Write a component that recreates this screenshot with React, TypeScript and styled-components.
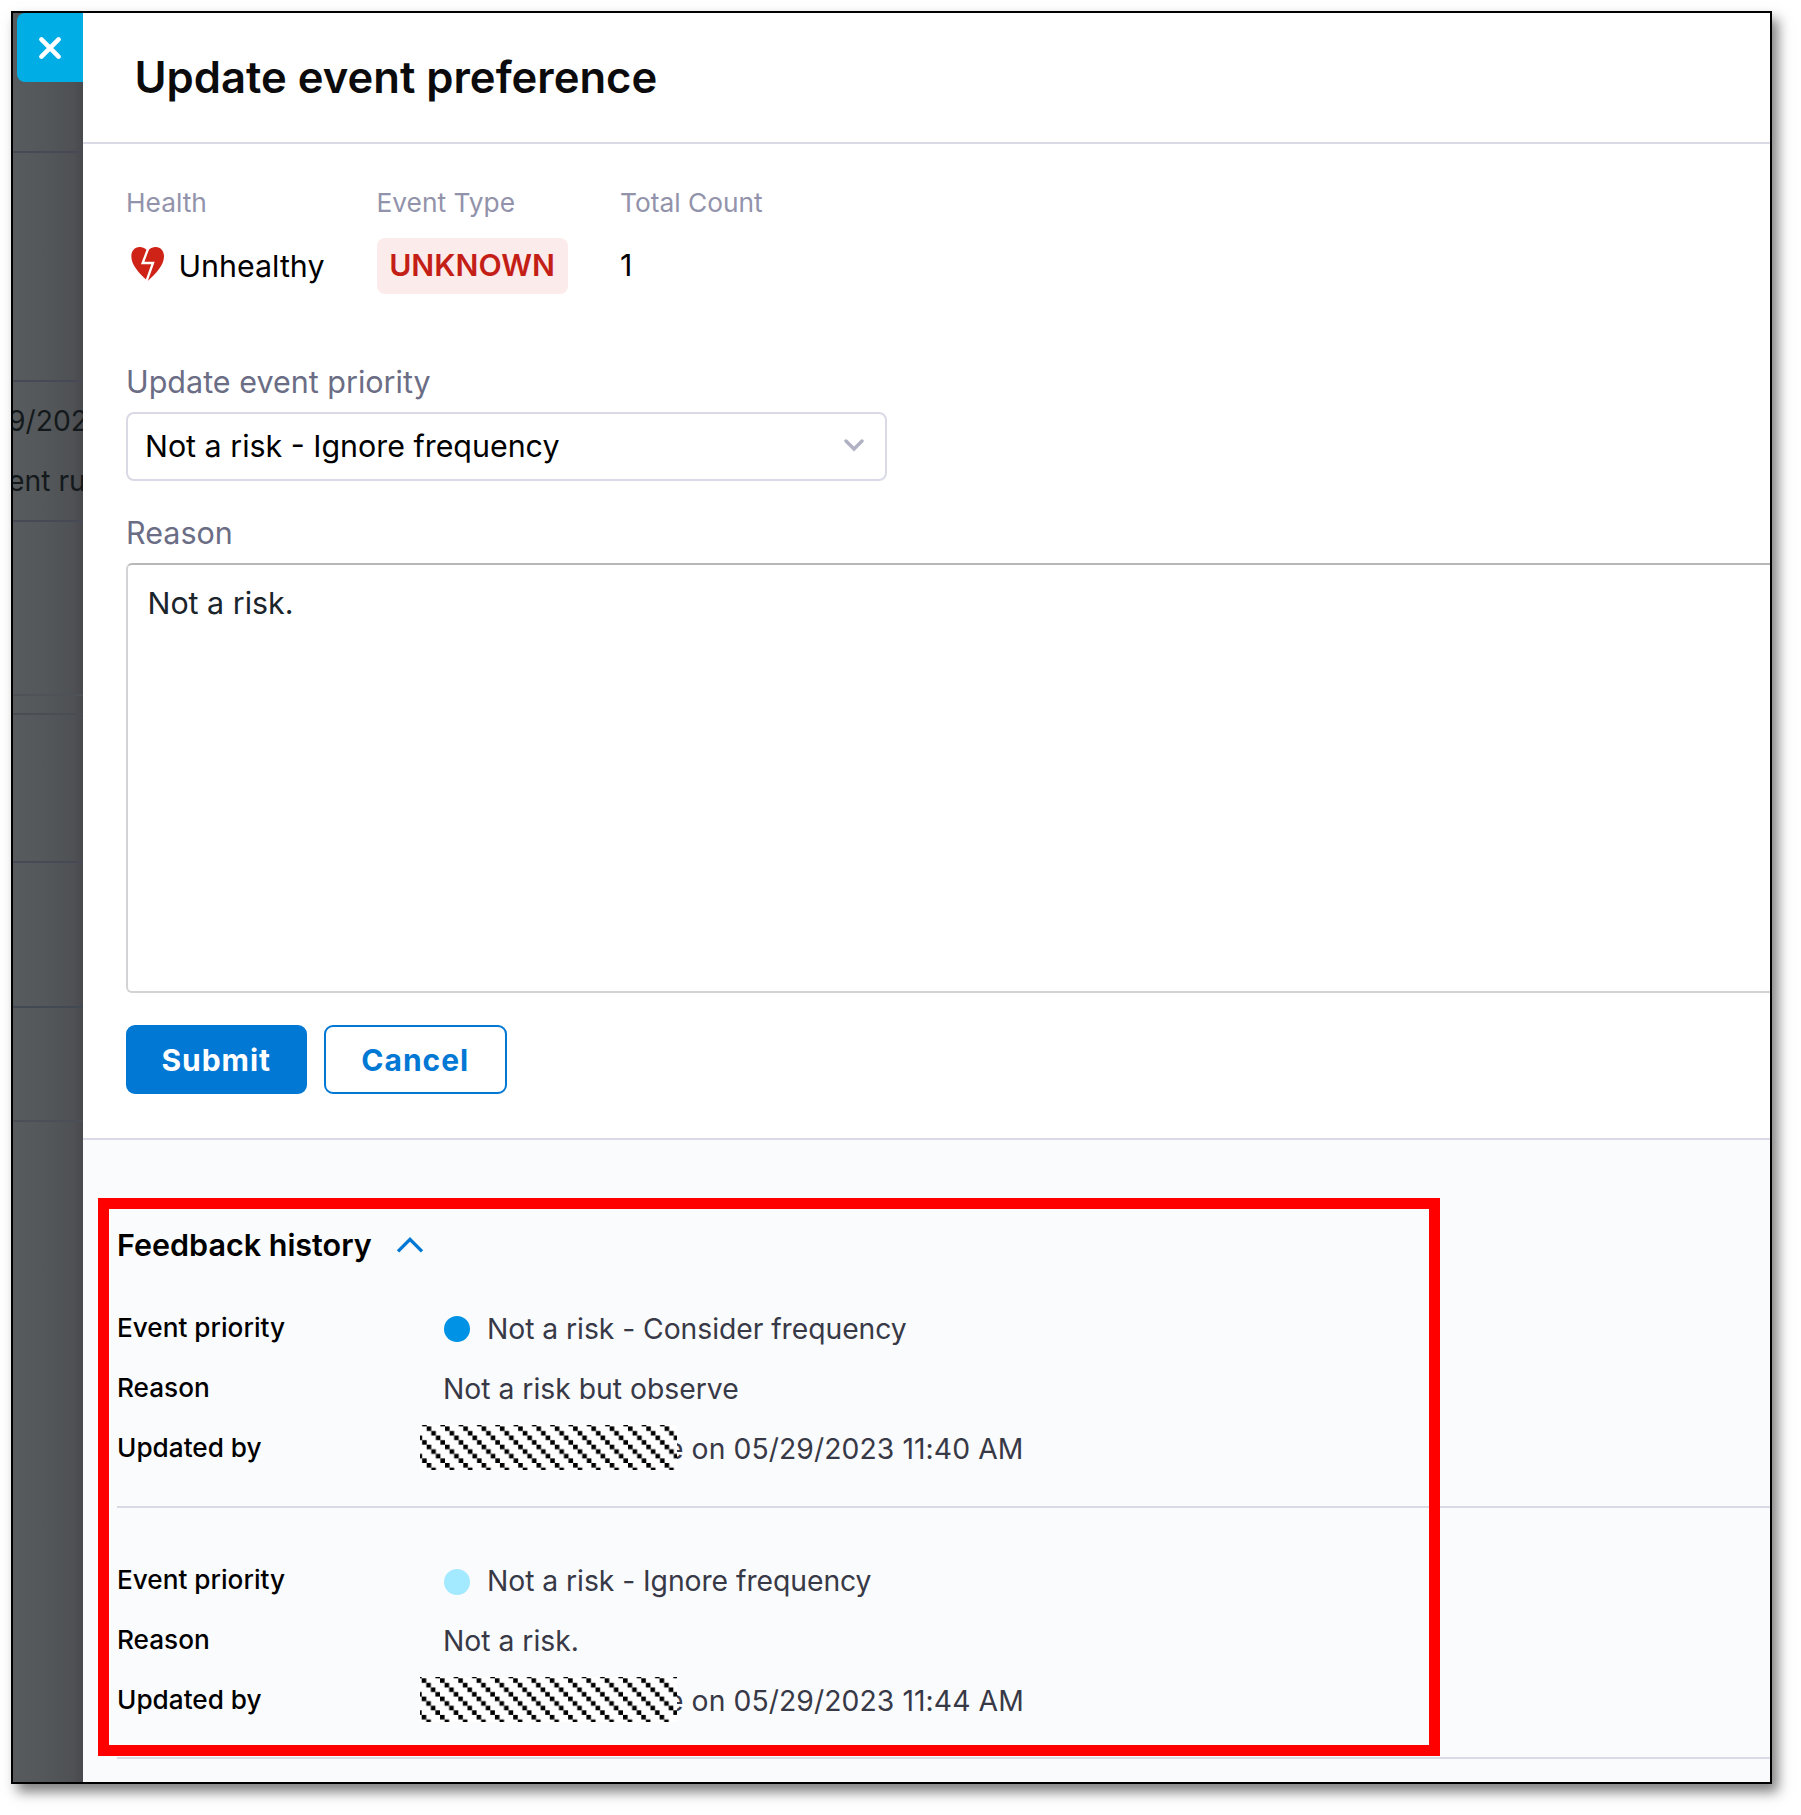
import React from "react";
import styled, { createGlobalStyle } from "styled-components";

const color = {
  line: "#d9dae6",
  primary: "#0278d5",
  accent: "#00ade4",
  danger: "#c41f17",
  muted: "#9293ab",
  label: "#6b6d85",
  text: "#383946",
};

const GlobalStyle = createGlobalStyle`
  * { box-sizing: border-box; }
  body {
    margin: 0;
    background: #fff;
    font-family: Inter, "Liberation Sans", sans-serif;
    color: #000;
  }
`;

const Page = styled.main`
  width: 1801px;
  height: 1815px;
  padding: 11px 0 0 11px;
  overflow: hidden;
`;

const Frame = styled.div`
  position: relative;
  display: flex;
  width: 1761px;
  height: 1773px;
  border: 2px solid #000;
  box-shadow: 6px 8px 12px rgba(0, 0, 0, 0.5);
  overflow: hidden;
`;

const Backdrop = styled.aside`
  flex: none;
  width: 70px;
  overflow: hidden;
  background: linear-gradient(90deg, #575b5d 0%, #53575a 50%, #4f5154 85%, #48494c 100%);
`;

const BackdropBand = styled.div<{ $height: number; $line?: string; $top?: number }>`
  height: ${(p) => p.$height}px;
  padding-top: ${(p) => p.$top ?? 0}px;
  border-bottom: 2px solid ${(p) => p.$line ?? "#474a54"};
`;

const BackdropText = styled.div`
  height: 59.5px;
  margin-left: -5px;
  line-height: 59.5px;
  font-size: 28.3px;
  white-space: nowrap;
  color: #14191c;
`;

const CloseButton = styled.button`
  display: flex;
  align-items: center;
  justify-content: center;
  width: 66px;
  height: 69px;
  margin-left: 4px;
  padding: 0;
  border: 0;
  border-radius: 8px 0 0 8px;
  background: ${color.accent};
`;

const Drawer = styled.section`
  flex: 1;
  min-width: 0;
  display: flex;
  flex-direction: column;
  background: #fff;
`;

const Header = styled.header`
  display: flex;
  align-items: center;
  height: 131px;
  padding: 0 0 0 51.5px;
  border-bottom: 2px solid ${color.line};
`;

const Title = styled.h1`
  margin: 0;
  font-size: 43.6px;
  font-weight: 600;
  line-height: 56px;
  color: #0b0b0d;
`;

const Form = styled.div`
  display: flex;
  flex-direction: column;
  align-items: flex-start;
  height: 995.5px;
  padding: 43.4px 0 0 43px;
  border-bottom: 2px solid ${color.line};
`;

const Stats = styled.div`
  display: grid;
  grid-template-columns: 250.5px 243.5px auto;
  row-gap: 18.6px;
`;

const StatLabel = styled.div`
  font-size: 26.3px;
  line-height: 32px;
  color: ${color.muted};
`;

const StatValue = styled.div`
  display: flex;
  align-items: center;
  height: 56px;
  font-size: 30.4px;
  line-height: 36px;
`;

const HeartIcon = styled.svg`
  width: 43px;
  height: 34px;
  margin-bottom: 4px;
`;

const HealthText = styled.span`
  margin: 1px 0 0 9.5px;
`;

const CountText = styled.span`
  margin-bottom: 2px;
`;

const Badge = styled.span`
  width: 191px;
  height: 56px;
  line-height: 54px;
  border-radius: 8px;
  background: #fcebeb;
  color: ${color.danger};
  font-size: 30.2px;
  font-weight: 600;
  text-align: center;
`;

const FieldLabel = styled.label<{ $top: number }>`
  margin: ${(p) => p.$top}px 0 11.8px;
  font-size: 30.5px;
  line-height: 36px;
  color: ${color.label};
`;

const Select = styled.div`
  display: flex;
  align-items: center;
  justify-content: space-between;
  width: 761px;
  height: 68.4px;
  padding: 0 20px 0 17px;
  border: 2px solid ${color.line};
  border-radius: 8px;
  font-size: 30.4px;
  line-height: 36px;
`;

const ReasonInput = styled.textarea`
  display: block;
  flex: none;
  width: 1680px;
  height: 429.6px;
  padding: 20px 19.5px;
  border: 2px solid #d3d3d6;
  border-top-color: #b7b7b9;
  border-radius: 6px;
  outline: 0;
  resize: none;
  font: 400 30.4px/36px Inter, "Liberation Sans", sans-serif;
  color: #1a242b;
`;

const Actions = styled.div`
  display: flex;
  gap: 17.5px;
  margin-top: 32.5px;
`;

const Button = styled.button<{ $primary?: boolean }>`
  width: ${(p) => (p.$primary ? 180.5 : 182.5)}px;
  height: 69px;
  padding: 0;
  border: 2px solid ${color.primary};
  border-radius: 9px;
  background: ${(p) => (p.$primary ? color.primary : "#fff")};
  color: ${(p) => (p.$primary ? "#fff" : color.primary)};
  font: 700 30px/36px Inter, "Liberation Sans", sans-serif;
  letter-spacing: 1px;
`;

const History = styled.div`
  flex: 1;
  padding: 93px 0 0 34px;
  background: #fafbfd;
`;

const HistoryHeader = styled.div`
  display: flex;
  align-items: center;
  gap: 24px;
  height: 24px;
`;

const HistoryTitle = styled.h2`
  margin: 0;
  font-size: 30.5px;
  font-weight: 600;
  line-height: 24px;
`;

const Entry = styled.div`
  padding: 42px 0 27.6px;
  border-bottom: 2px solid ${color.line};
  & + & { padding: 43px 0 26.2px; }
`;

const EntryRow = styled.div`
  display: grid;
  grid-template-columns: 326px auto;
  align-items: center;
  height: 60px;
`;

const EntryLabel = styled.div`
  padding-bottom: 2px;
  font-size: 26.2px;
  font-weight: 500;
  line-height: 32px;
`;

const EntryValue = styled.div<{ $spacing?: number }>`
  display: flex;
  align-items: center;
  font-size: 28.3px;
  line-height: 34px;
  letter-spacing: ${(p) => p.$spacing ?? 0}px;
  color: ${color.text};
`;

const Dot = styled.i<{ $color: string }>`
  width: 26px;
  height: 26px;
  margin: 1px 17px 0 1px;
  border-radius: 50%;
  background: ${(p) => p.$color};
`;

const Mask = styled.svg`
  position: relative;
  z-index: 1;
  flex: none;
  width: 257px;
  height: 45px;
  margin: -12.5px -10px -9.5px -23px;
`;

const Highlight = styled.div`
  position: absolute;
  left: 85px;
  top: 1185px;
  width: 1342px;
  height: 558px;
  border: 11px solid #f00;
  pointer-events: none;
`;

const CELL = 4.575;

function RedactedName({ id, dx, dy }: { id: string; dx: number; dy: number }) {
  const tile = CELL * 4;
  return (
    <Mask>
      <defs>
        <pattern id={id} x={dx} y={dy} width={tile} height={tile} patternUnits="userSpaceOnUse">
          {[0, 1, 2, 3].map((i) => (
            <rect key={i} x={i * CELL} y={i * CELL} width={CELL} height={CELL} fill="#000" />
          ))}
        </pattern>
      </defs>
      <rect width="257" height="45" fill="#fff" />
      <rect width="257" height="45" fill={`url(#${id})`} />
    </Mask>
  );
}

function BrokenHeart() {
  return (
    <HeartIcon viewBox="-16 0 129 102">
      <path
        d="M49 12C41 2 31 0 25 0C9 0 0 13 0 28C0 54 22 78 49 102C76 78 98 54 98 28C98 13 89 0 73 0C67 0 57 2 49 12Z"
        fill="#cf2318"
      />
      <path d="M53 -2L34 48H65L45 104" fill="none" stroke="#fff" strokeWidth="7" />
    </HeartIcon>
  );
}

const entries = [
  { id: "mask-a", dot: "#0092e4", priority: "Not a risk - Consider frequency", reason: "Not a risk but observe", time: "05/29/2023 11:40 AM", dx: 6.7, dy: 1.4 },
  { id: "mask-b", dot: "#a3e9ff", priority: "Not a risk - Ignore frequency", reason: "Not a risk.", time: "05/29/2023 11:44 AM", dx: 1.7, dy: 1.3 },
];

export default function App() {
  return (
    <Page>
      <GlobalStyle />
      <Frame>
        <Backdrop>
          <BackdropBand $height={140}>
            <CloseButton aria-label="Close">
              <svg width="24" height="24" viewBox="0 0 24 24" fill="none" stroke="#fff" strokeWidth="4.6" strokeLinecap="round">
                <path d="M3.4 3.4L20.6 20.6M20.6 3.4L3.4 20.6" />
              </svg>
            </CloseButton>
          </BackdropBand>
          <BackdropBand $height={229} />
          <BackdropBand $height={140} $top={10}>
            <BackdropText>9/2023</BackdropText>
            <BackdropText>ent run</BackdropText>
          </BackdropBand>
          <BackdropBand $height={174} $line="#4f5257" />
          <BackdropBand $height={19} $line="#4a4d52" />
          <BackdropBand $height={148} />
          <BackdropBand $height={145} $line="#424952" />
          <BackdropBand $height={114} $line="#4d4f57" />
        </Backdrop>

        <Drawer>
          <Header>
            <Title>Update event preference</Title>
          </Header>

          <Form>
            <Stats>
              <StatLabel>Health</StatLabel>
              <StatLabel>Event Type</StatLabel>
              <StatLabel>Total Count</StatLabel>
              <StatValue>
                <BrokenHeart />
                <HealthText>Unhealthy</HealthText>
              </StatValue>
              <StatValue>
                <Badge>UNKNOWN</Badge>
              </StatValue>
              <StatValue>
                <CountText>1</CountText>
              </StatValue>
            </Stats>

            <FieldLabel $top={70.5}>Update event priority</FieldLabel>
            <Select>
              Not a risk - Ignore frequency
              <svg width="22" height="14" viewBox="0 0 22 14" fill="none" stroke="#b0b1c3" strokeWidth="3.4" strokeLinecap="round">
                <path d="M3 2L11 10L19 2" />
              </svg>
            </Select>

            <FieldLabel $top={34.6}>Reason</FieldLabel>
            <ReasonInput defaultValue="Not a risk." />

            <Actions>
              <Button $primary>Submit</Button>
              <Button>Cancel</Button>
            </Actions>
          </Form>

          <History>
            <HistoryHeader>
              <HistoryTitle>Feedback history</HistoryTitle>
              <svg width="28" height="18" viewBox="0 0 28 18" fill="none" stroke={color.primary} strokeWidth="3.4">
                <path d="M2 15.4L14 3.4L26 15.4" />
              </svg>
            </HistoryHeader>
            {entries.map((e) => (
              <Entry key={e.id}>
                <EntryRow>
                  <EntryLabel>Event priority</EntryLabel>
                  <EntryValue $spacing={-0.05}>
                    <Dot $color={e.dot} />
                    {e.priority}
                  </EntryValue>
                </EntryRow>
                <EntryRow>
                  <EntryLabel>Reason</EntryLabel>
                  <EntryValue>{e.reason}</EntryValue>
                </EntryRow>
                <EntryRow>
                  <EntryLabel>Updated by</EntryLabel>
                  <EntryValue $spacing={0.08}>
                    <RedactedName id={e.id} dx={e.dx} dy={e.dy} />e on {e.time}
                  </EntryValue>
                </EntryRow>
              </Entry>
            ))}
          </History>
        </Drawer>
        <Highlight />
      </Frame>
    </Page>
  );
}
